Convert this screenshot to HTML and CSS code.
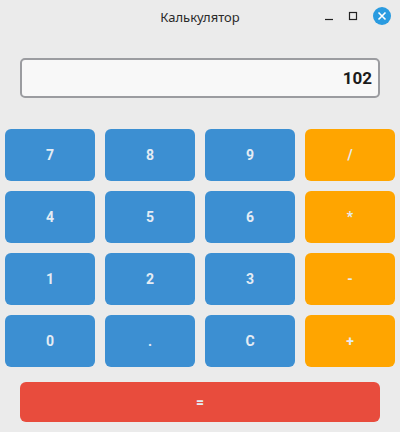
FILE: index.html
```html
<!DOCTYPE html>
<html lang="ru">
<head>
    <meta charset="UTF-8">
    <meta name="viewport" content="width=device-width, initial-scale=1.0">
    <title>Калькулятор</title>
    <link rel="stylesheet" href="styles.css">
</head>
<body>
    <div class="window">
        <div class="titlebar">
            <span class="title">Калькулятор</span>
            <div class="controls">
                <svg class="ctl" width="12" height="12" viewBox="0 0 12 12">
                    <line x1="2" y1="9.5" x2="10" y2="9.5" stroke="#222" stroke-width="1.2"/>
                </svg>
                <svg class="ctl" width="12" height="12" viewBox="0 0 12 12">
                    <rect x="2.5" y="2.5" width="7" height="7" fill="none" stroke="#222" stroke-width="1.2"/>
                </svg>
                <svg class="close" width="18" height="18" viewBox="0 0 18 18">
                    <circle cx="9" cy="9" r="9" fill="#2a9be0"/>
                    <path d="M5.5 5.5 L12.5 12.5 M12.5 5.5 L5.5 12.5" stroke="#fff" stroke-width="1.6"/>
                </svg>
            </div>
        </div>

        <div class="display">102</div>

        <div class="keys">
            <button class="key">7</button>
            <button class="key">8</button>
            <button class="key">9</button>
            <button class="key op">/</button>
            <button class="key">4</button>
            <button class="key">5</button>
            <button class="key">6</button>
            <button class="key op">*</button>
            <button class="key">1</button>
            <button class="key">2</button>
            <button class="key">3</button>
            <button class="key op">-</button>
            <button class="key">0</button>
            <button class="key">.</button>
            <button class="key">C</button>
            <button class="key op">+</button>
        </div>

        <button class="equals">=</button>
    </div>
</body>
</html>
```

FILE: styles.css
```css
body {
    margin: 0;
    background-color: #ebebeb;
    font-family: Roboto, "Liberation Sans", sans-serif;
}

.window {
    width: 400px;
    height: 432px;
    background-color: #ebebeb;
}

.titlebar {
    height: 34px;
    position: relative;
    display: flex;
    align-items: center;
    justify-content: center;
}

.title {
    font-family: "Noto Sans", "Open Sans", sans-serif;
    font-size: 13px;
    color: #2a2a2a;
}

.controls {
    position: absolute;
    right: 9px;
    top: 7px;
    display: flex;
    align-items: center;
    gap: 12px;
}

.ctl {
    display: block;
}

.close {
    display: block;
    margin-left: 2px;
}

.display {
    margin: 24px 20px 0;
    height: 40px;
    box-sizing: border-box;
    border: 2px solid #9b9ca0;
    border-radius: 5px;
    background-color: #f8f8f8;
    display: flex;
    align-items: center;
    justify-content: flex-end;
    padding: 0 6px;
    font-size: 17px;
    font-weight: bold;
    color: #1b1b1b;
}

.keys {
    margin-top: 31px;
    padding: 0 5px;
    display: grid;
    grid-template-columns: repeat(4, 1fr);
    grid-auto-rows: 52px;
    gap: 10px;
}

.key {
    border: none;
    border-radius: 6px;
    background-color: #3c8fd2;
    color: #e4ecf4;
    font-family: Roboto, "Liberation Sans", sans-serif;
    font-size: 14px;
    font-weight: bold;
    padding: 0;
}

.key.op {
    background-color: #ffa500;
}

.equals {
    display: block;
    margin: 15px 20px 0;
    width: 360px;
    height: 40px;
    border: none;
    border-radius: 6px;
    background-color: #e84c3d;
    color: #e4ecf4;
    font-family: Roboto, "Liberation Sans", sans-serif;
    font-size: 14px;
    font-weight: bold;
}
```
